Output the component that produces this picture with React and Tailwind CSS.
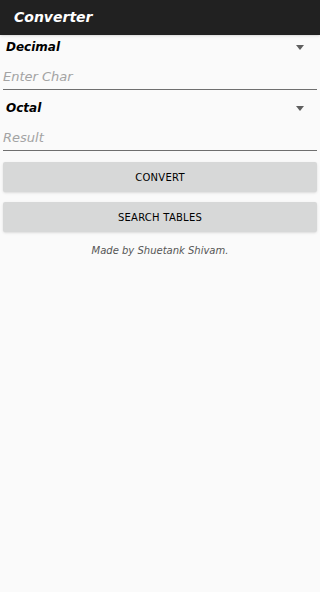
import { useState } from "react";

const font = { fontFamily: '"DejaVu Sans", "Liberation Sans", sans-serif' };

function Caret() {
  return (
    <svg width="8" height="5" viewBox="0 0 8 5" className="shrink-0">
      <path d="M0 0 L8 0 L4 5 Z" fill="#5f5f5f" />
    </svg>
  );
}

function Spinner({ label }) {
  return (
    <div className="flex h-[24px] items-center justify-between pl-[6px] pr-[16px]">
      <span className="text-[12px] font-bold italic text-black">{label}</span>
      <Caret />
    </div>
  );
}

function Field({ hint }) {
  return (
    <div className="mx-[3px] flex h-[31px] items-end border-b border-[#6f6f6f] pb-[3px]">
      <span className="text-[13px] italic text-[#a3a3a3]">{hint}</span>
    </div>
  );
}

export default function App() {
  const [from] = useState("Decimal");
  const [to] = useState("Octal");
  return (
    <div className="min-h-[592px] w-full bg-[#fafafa]" style={font}>
      <header className="flex h-[35px] items-center bg-[#212121] px-[14px] shadow">
        <h1 className="text-[14px] font-bold italic text-white">Converter</h1>
      </header>

      <div>
        <Spinner label={from} />
        <Field hint="Enter Char" />
        <div className="h-[6px]" />
        <Spinner label={to} />
        <Field hint="Result" />
      </div>

      <div className="mt-[11px] flex flex-col gap-[10px] px-[3px]">
        <button className="h-[30px] rounded-[2px] bg-[#d7d8d8] text-[10px] font-medium uppercase tracking-wide text-black shadow-sm">
          Convert
        </button>
        <button className="h-[30px] rounded-[2px] bg-[#d7d8d8] text-[10px] font-medium uppercase tracking-wide text-black shadow-sm">
          Search Tables
        </button>
      </div>

      <p className="mt-[11px] text-center text-[10px] italic text-[#555]">
        Made by Shuetank Shivam.
      </p>
    </div>
  );
}
